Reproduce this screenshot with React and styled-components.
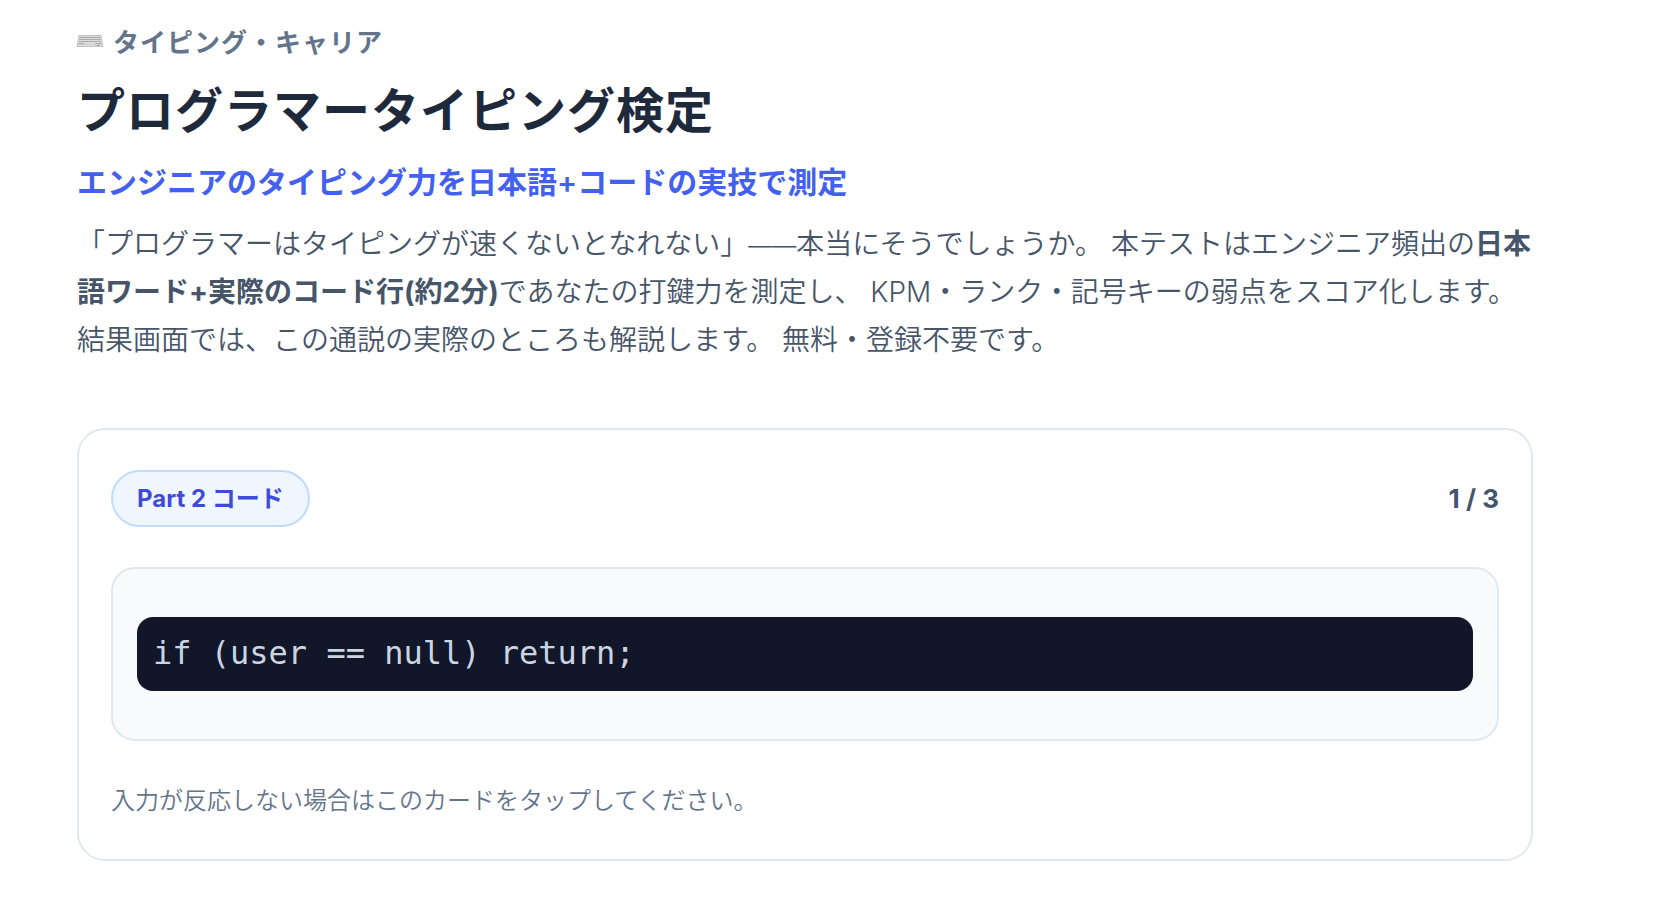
import React from "react";
import styled, { createGlobalStyle } from "styled-components";

const GlobalStyle = createGlobalStyle`
  * {
    box-sizing: border-box;
  }

  body {
    margin: 0;
    background: #ffffff;
    color: #475569;
    font-family: Inter, "Noto Sans CJK JP", sans-serif;
  }
`;

const Page = styled.main`
  padding: 20px 129px 48px 77px;

  @media only screen and (max-width: 768px) {
    padding: 20px 24px 48px;
  }
`;

const Eyebrow = styled.p`
  display: flex;
  align-items: center;
  gap: 10px;
  margin: 0;
  color: #64748b;
  font-size: 26px;
  font-weight: 600;
  line-height: 46px;
  letter-spacing: 1px;
`;

const Title = styled.h1`
  margin: 12px 0 0;
  color: #1e293b;
  font-size: 48px;
  font-weight: 600;
  line-height: 66px;
  letter-spacing: 1px;
`;

const Subtitle = styled.p`
  margin: 12px 0 0;
  color: #4361ee;
  font-size: 30px;
  font-weight: 600;
  line-height: 52px;
`;

const Lead = styled.p`
  margin: 12px 0 0;
  font-size: 28px;
  font-weight: 350;
  line-height: 48px;

  strong {
    font-weight: 700;
  }
`;

const Dash = styled.span`
  font-size: 24px;
  line-height: 1;
`;

const Card = styled.section`
  margin-top: 64px;
  padding: 40px 32px 38px;
  border: 2px solid #e2e8f0;
  border-radius: 28px;
  background: #ffffff;
`;

const CardHeader = styled.div`
  display: flex;
  align-items: center;
  justify-content: space-between;
`;

const PartBadge = styled.span`
  padding: 8px 24px;
  border: 2px solid #bfdbfe;
  border-radius: 32px;
  background: #eff6ff;
  color: #3f4bd8;
  font-size: 24px;
  font-weight: 700;
  line-height: 37px;
`;

const Counter = styled.span`
  font-size: 26px;
  font-weight: 700;
`;

const Prompt = styled.div`
  margin-top: 40px;
  padding: 48px 24px;
  border: 2px solid #e2e8f0;
  border-radius: 24px;
  background: #f8fafc;
`;

const CodeLine = styled.code`
  display: block;
  padding: 11px 16px 13px;
  border-radius: 16px;
  background: #111629;
  color: #cbd5e1;
  font-family: "DejaVu Sans Mono", monospace;
  font-size: 32px;
  line-height: 50px;
`;

const Hint = styled.p`
  margin: 40px 0 0;
  color: #64748b;
  font-size: 24px;
  font-weight: 350;
  line-height: 40px;
`;

const keyRows = [3, 5, 7, 9];

const KeyboardIcon = () => (
  <svg width="26" height="18" viewBox="0 0 26 18" aria-hidden="true">
    <path d="M2 1.5H24L25.6 11V12.5H.4V11Z" fill="#dcdcdc" stroke="#b0b0b0" strokeWidth=".7" />
    <path d="M.5 11H25.5V12.5H.5Z" fill="#f4f4f4" stroke="#a8a8a8" strokeWidth=".5" />
    {keyRows.map((y) => (
      <path key={y} d={`M${3 - y / 8} ${y + 0.5}H${23 + y / 8}`} stroke="#989898" strokeWidth=".9" strokeDasharray="1.6 .3" />
    ))}
    <path d="M7 9.5H18" stroke="#f2f2f2" strokeWidth=".7" />
    <path d="M20 11.5H22.5" stroke="#888" strokeWidth=".8" />
  </svg>
);

const App = () => {
  return (
    <>
      <GlobalStyle />
      <Page>
        <Eyebrow>
          <KeyboardIcon />
          タイピング・キャリア
        </Eyebrow>
        <Title>プログラマータイピング検定</Title>
        <Subtitle>エンジニアのタイピング力を日本語+コードの実技で測定</Subtitle>
        <Lead>
          「プログラマーはタイピングが速くないとなれない」<Dash>——</Dash>本当にそうでしょうか。
          本テストはエンジニア頻出の<strong>日本語ワード+実際のコード行(約2分)</strong>であなたの打鍵力を測定し、
          KPM・ランク・記号キーの弱点をスコア化します。
          結果画面では、この通説の実際のところも解説します。 無料・登録不要です。
        </Lead>
        <Card>
          <CardHeader>
            <PartBadge>Part 2 コード</PartBadge>
            <Counter>1 / 3</Counter>
          </CardHeader>
          <Prompt>
            <CodeLine>if (user == null) return;</CodeLine>
          </Prompt>
          <Hint>入力が反応しない場合はこのカードをタップしてください。</Hint>
        </Card>
      </Page>
    </>
  );
};

export default App;
